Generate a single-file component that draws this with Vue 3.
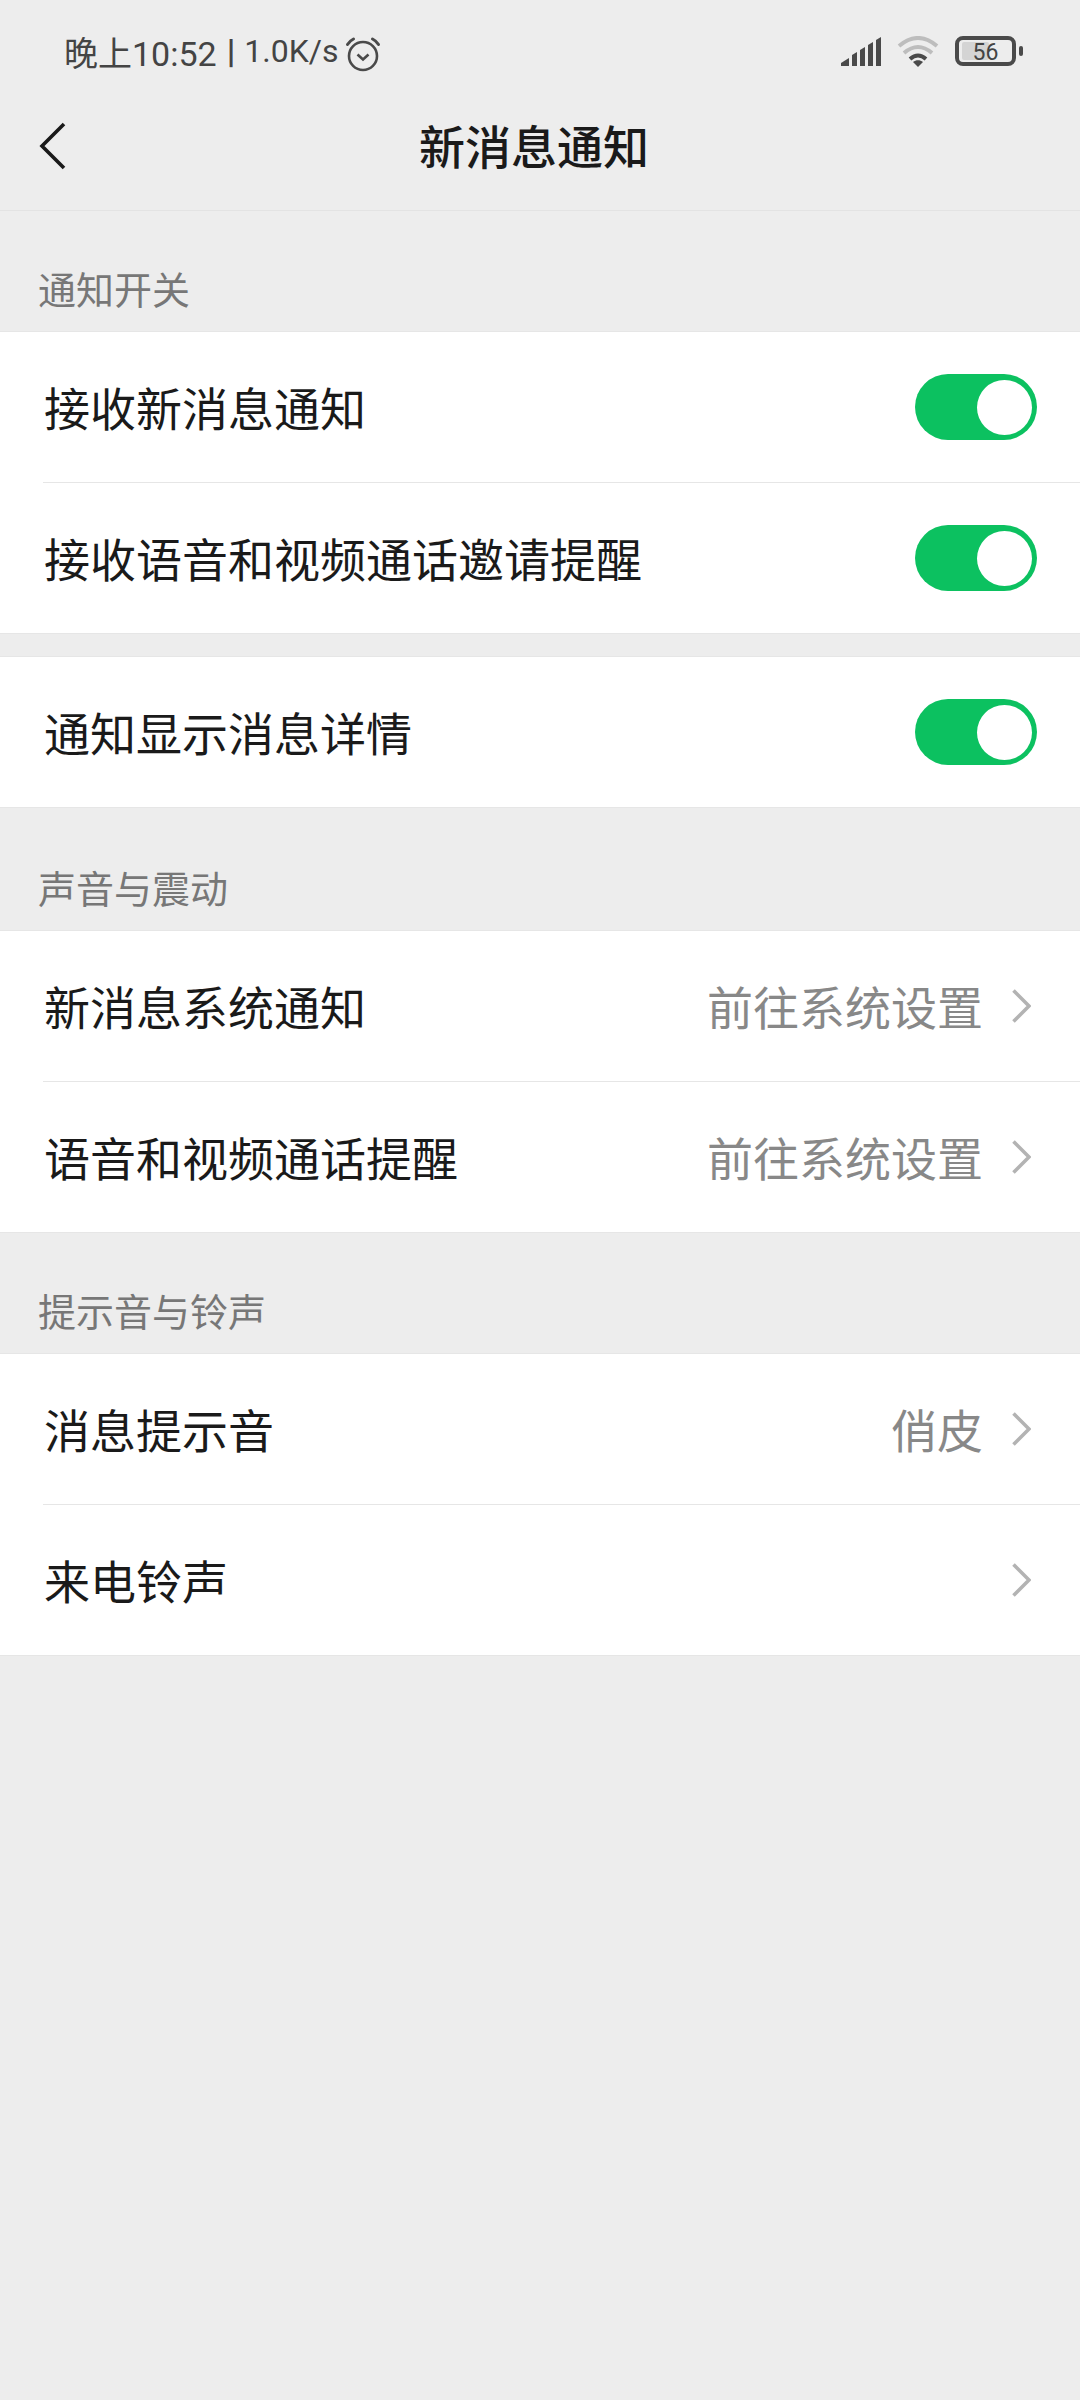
<template>
  <div class="page">
    <div class="status-bar">
      <div class="status-left">
        <span>晚上10:52</span>
        <span class="pipe">|</span>
        <span class="speed">1.0K/s</span>
        <svg class="alarm" width="36" height="36" viewBox="0 0 36 36" fill="none" stroke="#4a4a4a">
          <circle cx="18" cy="20" r="14" stroke-width="2.6" />
          <path d="M12.5 18.5l5.5 5 5.5-5" stroke-width="2.6" />
          <path d="M2.5 8.5C4 6 6 4.2 8.5 3M33.5 8.5C32 6 30 4.2 27.5 3" stroke-width="3" stroke-linecap="round" />
        </svg>
      </div>
      <div class="status-right">
        <svg width="40" height="29" viewBox="0 0 40 29" fill="#4a4a4a">
          <path d="M0 29v-3l8-5v8z" />
          <path d="M11 29V18l5-3v14z" />
          <path d="M19 29V13l5-3v19z" />
          <path d="M27 29V8l5-3v24z" />
          <path d="M35 29V3l5-3v29z" />
        </svg>
        <svg class="wifi" width="42" height="31" viewBox="0 0 42 31" fill="none">
          <path d="M2 10Q21-6 40 10" stroke="#bdbdbd" stroke-width="4" />
          <path d="M7 17Q21 5 35 17" stroke="#bdbdbd" stroke-width="4" />
          <path d="M13 23Q21 16 29 23" stroke="#4a4a4a" stroke-width="4" />
          <path d="M21 31l-5-5c3-2.500 7-2.500 10 0z" fill="#4a4a4a" />
        </svg>
        <div class="battery">
          <div class="battery-body">
            <div class="battery-level"></div>
            <span class="battery-num">56</span>
          </div>
          <div class="battery-tip"></div>
        </div>
      </div>
    </div>

    <div class="nav-bar">
      <svg class="back" width="28" height="48" viewBox="0 0 28 48" fill="none" stroke="#1a1a1a" stroke-width="3.600">
        <path d="M25 2L3 24l22 22" />
      </svg>
      <div class="nav-title">新消息通知</div>
    </div>

    <template v-for="group in groups" :key="group.id">
      <div v-if="group.title" class="section-title" :class="{ tall: group.tall }">{{ group.title }}</div>
      <div v-else class="section-gap"></div>
      <div class="card">
        <div v-for="item in group.items" :key="item.label" class="row">
          <span class="row-label">{{ item.label }}</span>
          <div v-if="item.toggle" class="switch">
            <div class="knob"></div>
          </div>
          <div v-else class="row-right">
            <span v-if="item.value" class="row-value">{{ item.value }}</span>
            <svg class="chevron" width="19" height="34" viewBox="0 0 19 34" fill="none" stroke="#b3b3b3" stroke-width="3.600">
              <path d="M1.500 1.500L17 17 1.500 32.500" />
            </svg>
          </div>
        </div>
      </div>
    </template>
  </div>
</template>

<script setup>
const groups = [
  {
    id: 1,
    title: '通知开关',
    items: [
      { label: '接收新消息通知', toggle: true },
      { label: '接收语音和视频通话邀请提醒', toggle: true }
    ]
  },
  {
    id: 2,
    items: [{ label: '通知显示消息详情', toggle: true }]
  },
  {
    id: 3,
    title: '声音与震动',
    tall: true,
    items: [
      { label: '新消息系统通知', value: '前往系统设置' },
      { label: '语音和视频通话提醒', value: '前往系统设置' }
    ]
  },
  {
    id: 4,
    title: '提示音与铃声',
    items: [
      { label: '消息提示音', value: '俏皮' },
      { label: '来电铃声' }
    ]
  }
]
</script>

<style>
html,
body {
  margin: 0;
  background: #ededed;
}
</style>

<style scoped>
.page {
  width: 1080px;
  min-height: 2400px;
  background: #ededed;
  font-family: "Noto Sans CJK SC", "Noto Sans", sans-serif;
  color: #1a1a1a;
}

.status-bar {
  height: 104px;
  box-sizing: border-box;
  padding: 26px 57px 0 64px;
  display: flex;
  justify-content: space-between;
  align-items: flex-start;
  color: #444;
  font-size: 34px;
}

.status-left {
  display: flex;
  align-items: center;
  height: 50px;
  padding-bottom: 2px;
  font-family: Roboto, "Noto Sans CJK SC", sans-serif;
}

.pipe {
  margin: 0 9px 0 10px;
  font-weight: 700;
}

.speed {
  font-size: 32px;
}

.alarm {
  margin-left: 7px;
  margin-top: 6px;
}

.status-right {
  display: flex;
  align-items: center;
  height: 50px;
}

.wifi {
  margin-left: 16px;
}

.battery {
  display: flex;
  align-items: center;
  margin-left: 16px;
}

.battery-body {
  position: relative;
  width: 61px;
  height: 30px;
  box-sizing: border-box;
  border: 4px solid #4a4a4a;
  border-radius: 8px;
}

.battery-level {
  position: absolute;
  left: 3px;
  top: 2px;
  bottom: 2px;
  width: 27px;
  background: #d4d4d4;
  border-radius: 2px;
}

.battery-num {
  position: absolute;
  inset: 0;
  padding-top: 2px;
  display: flex;
  align-items: center;
  justify-content: center;
  font-family: Roboto, sans-serif;
  font-size: 23px;
  color: #444;
}

.battery-tip {
  width: 4px;
  height: 10px;
  margin-left: 3px;
  background: #4a4a4a;
  border-radius: 2px;
}

.nav-bar {
  position: relative;
  height: 107px;
  box-sizing: border-box;
  padding-bottom: 26px;
  border-bottom: 1px solid #e3e3e3;
  display: flex;
  align-items: center;
  justify-content: center;
}

.back {
  position: absolute;
  left: 39px;
  top: 18px;
}

.nav-title {
  margin-right: 12px;
  font-size: 46px;
  font-weight: 500;
  color: #1a1a1a;
}

.section-title {
  height: 120px;
  box-sizing: border-box;
  padding: 0 0 18px 38px;
  display: flex;
  align-items: flex-end;
  font-size: 38px;
  line-height: 50px;
  color: #777;
}

.section-title.tall {
  height: 122px;
}

.section-gap {
  height: 22px;
}

.card {
  background: #fff;
  border-top: 1px solid #e6e6e6;
  border-bottom: 1px solid #e6e6e6;
}

.row {
  height: 150px;
  margin-left: 43px;
  padding-right: 43px;
  display: flex;
  align-items: center;
  justify-content: space-between;
  border-bottom: 1px solid #e6e6e6;
}

.row:last-child {
  border-bottom: none;
}

.row-label {
  padding: 0 0 2px 1px;
  font-size: 46px;
  color: #1a1a1a;
}

.row-right {
  display: flex;
  align-items: center;
  padding-right: 6px;
}

.row-value {
  padding-bottom: 2px;
  font-size: 46px;
  color: #888;
}

.chevron {
  margin-left: 29px;
}

.switch {
  position: relative;
  width: 122px;
  height: 66px;
  border-radius: 33px;
  background: #0cc160;
}

.knob {
  position: absolute;
  right: 5px;
  top: 5.500px;
  width: 55px;
  height: 55px;
  border-radius: 50%;
  background: #fff;
}
</style>
